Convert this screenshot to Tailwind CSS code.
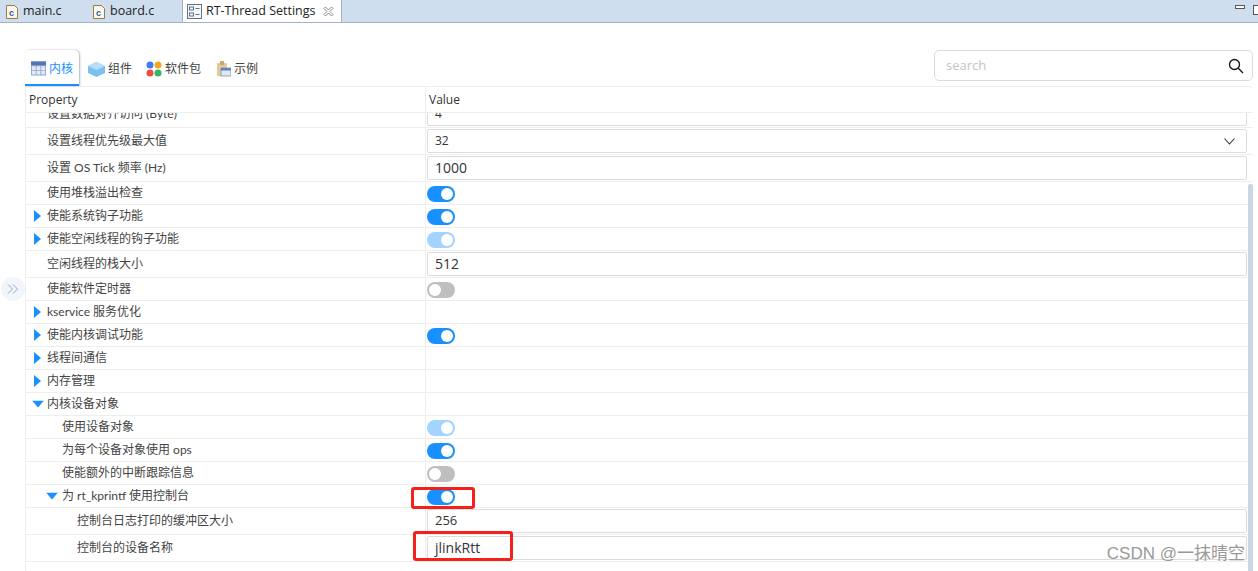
<!DOCTYPE html>
<html lang="zh-CN">
<head>
    <meta charset="UTF-8">
    <title>RT-Thread Settings</title>
    <script src="https://cdn.jsdelivr.net/npm/@tailwindcss/browser@4"></script>
</head>
<body class="bg-white">
<div class="relative w-[1258px] h-[571px] overflow-hidden bg-white text-[#333] text-[12px] font-['Open_Sans','Noto_Sans_CJK_SC',sans-serif]">

    <!-- editor tabs -->
    <div class="flex h-[23px] bg-[#cfdeee] border-b border-[#a3b2c6]">
        <div class="flex items-center w-[93px] pl-[6px] pt-[1px] gap-[5px] text-[12.5px] text-[#222]">
            <svg width="12" height="14" viewBox="0 0 12 14"><path d="M.5.5h8l3 3v10H.5z" fill="#fdf8ec" stroke="#9a7b45"/><text x="3" y="11" font-size="9" font-weight="700" fill="#2d5f9e" font-family="Liberation Sans">c</text></svg>
            <span>main.c</span>
        </div>
        <div class="flex items-center w-[89px] pt-[1px] gap-[5px] text-[12.5px] text-[#222]">
            <svg width="12" height="14" viewBox="0 0 12 14"><path d="M.5.5h8l3 3v10H.5z" fill="#fdf8ec" stroke="#9a7b45"/><text x="3" y="11" font-size="9" font-weight="700" fill="#2d5f9e" font-family="Liberation Sans">c</text></svg>
            <span>board.c</span>
        </div>
        <div class="flex items-center w-[160px] h-[23px] -mt-px pl-[4px] pt-[1px] gap-[4px] bg-white border-x border-[#a3b2c6] text-[12.5px] text-[#222]">
            <svg width="15" height="15" viewBox="0 0 15 15" fill="none" stroke="#5f7389"><rect x=".5" y=".5" width="14" height="14" fill="#f4f6f9"/><rect x="2.500" y="3" width="4" height="3"/><rect x="2.500" y="9" width="4" height="3"/><path d="M8.500 4.500h4M8.500 10.500h4"/></svg>
            <span class="whitespace-nowrap">RT-Thread Settings</span>
            <svg class="ml-[3px]" width="11" height="11" viewBox="0 0 11 11" fill="none" stroke="#8a8a8a"><path d="M1 2.500 2.500 1 5.500 4 8.500 1 10 2.500 7 5.500 10 8.500 8.500 10 5.500 7 2.500 10 1 8.500 4 5.500z"/></svg>
        </div>
        <div class="ml-auto flex items-start pt-[5px] gap-[8px]">
            <div class="w-[10px] h-[4px] border border-[#555] bg-white"></div>
            <div class="w-[5px] h-[10px] border-l border-y border-[#555] bg-white"></div>
        </div>
    </div>

    <!-- collapse handle -->
    <div class="absolute left-[1px] top-[277px] w-[24px] h-[24px] rounded-full bg-[#f2f5f9] flex items-center justify-center">
        <svg width="12" height="10" viewBox="0 0 12 10" fill="none" stroke="#88a9cc"><path d="M1 .5 5.500 5 1 9.500M6 .5 10.500 5 6 9.500"/></svg>
    </div>

    <div class="pl-[25px] pr-[5px] pt-[27px]">
        <!-- tabs + search -->
        <div class="flex items-start h-[36px]">
            <div class="flex items-center gap-[3px] w-[54px] h-[36px] pl-[6px] pt-[3px] rounded-t-[5px] border-b-2 border-[#1890ff] shadow-[1px_0_2px_rgba(0,0,0,0.3)] text-[#1890ff]">
                <svg width="15" height="15" viewBox="0 0 16 15"><rect width="16" height="15" fill="#8fa8d8"/><rect width="16" height="4" fill="#5274b8"/><path d="M1 5h4v4H1zM6 5h4v4H6zM11 5h4v4h-4zM1 10h4v4H1zM6 10h4v4H6zM11 10h4v4h-4z" fill="#e4ebf7"/></svg>
                <span>内核</span>
            </div>
            <div class="flex items-center gap-[3px] h-[34px] pt-[4px] ml-[9px] text-[#444]">
                <svg width="17" height="15" viewBox="0 0 17 15"><path d="M8.500 0 17 4v7l-8.500 4L0 11V4z" fill="#7cc0f0"/><path d="M8.500 0 17 4l-8.500 4L0 4z" fill="#b7def8"/></svg>
                <span>组件</span>
            </div>
            <div class="flex items-center gap-[3px] h-[34px] pt-[4px] ml-[14px] text-[#444]">
                <svg width="16" height="16" viewBox="0 0 16 16"><circle cx="4" cy="4" r="3.500" fill="#3d7df0"/><circle cx="12" cy="4" r="3.500" fill="#f5a623"/><circle cx="4" cy="12" r="3.500" fill="#ef4b3e"/><circle cx="12" cy="12" r="3.500" fill="#35b560"/></svg>
                <span>软件包</span>
            </div>
            <div class="flex items-center gap-[3px] h-[34px] pt-[4px] ml-[16px] text-[#444]">
                <svg width="14" height="16" viewBox="0 0 14 16"><rect y="2" width="10" height="13" rx="1" fill="#e8c99c"/><rect x="3" width="4" height="4" fill="#c9a878"/><rect x="4" y="7" width="10" height="8" fill="#dfe8f3" stroke="#7d93ad" stroke-width=".8"/><rect x="4" y="7" width="10" height="2.500" fill="#5e86b8"/></svg>
                <span>示例</span>
            </div>
            <div class="ml-auto flex items-center justify-between w-[319px] h-[31px] pl-[11px] pr-[8px] border border-[#dcdcdc] rounded-[5px] text-[13px] text-[#c4c4c4]">
                <span>search</span>
                <svg width="16" height="16" viewBox="0 0 16 16" fill="none" stroke="#111" stroke-width="1.300"><circle cx="6.500" cy="6.500" r="5"/><path d="m10.300 10.300 4.700 4.700"/></svg>
            </div>
        </div>

        <!-- property table -->
        <div class="h-[485px] border-l border-[#eeeeee] overflow-hidden">
            <div class="flex h-[27px] items-center border-b border-t border-[#eeeeee] rounded-tr-[5px] text-[#333]">
                <div class="w-[400px] pl-[3px] border-r border-[#eeeeee] h-full flex items-center">Property</div>
                <div class="pl-[3px]">Value</div>
            </div>
            <div id="rows"></div>
        </div>
    </div>

    <!-- scrollbar -->
    <div class="absolute left-[1248px] top-[184px] w-[5px] h-[387px] bg-[#ccd5e3] rounded-t-[2px]"></div>

    <!-- red annotations -->
    <div class="absolute left-[411px] top-[487px] w-[64px] h-[22px] border-[3px] border-[#f5201a] rounded-[3px]"></div>
    <div class="absolute left-[413px] top-[531px] w-[100px] h-[30px] border-[3px] border-[#f5201a] rounded-[3px]"></div>

    <!-- watermark -->
    <div class="absolute right-[13px] top-[543px] text-[17px] leading-[22px] text-[#999] font-['Liberation_Sans','Noto_Sans_CJK_SC',sans-serif]">CSDN @一抹晴空</div>
</div>

<script>
    const rowsEl = document.getElementById('rows');

    const arrowRight = '<svg class="absolute left-[8px] top-1/2 -translate-y-1/2" width="7" height="12" viewBox="0 0 7 12"><path d="M0 0l7 6-7 6z" fill="#1890ff"/></svg>';
    const arrowDown = '<svg class="absolute top-1/2 -translate-y-1/2" width="12" height="7" viewBox="0 0 12 7"><path d="M0 0h12L6 7z" fill="#1890ff"/></svg>';
    const chevron = '<svg width="11" height="7" viewBox="0 0 11 7" fill="none" stroke="#333" stroke-width="1.100"><path d="M.5.5l5 5.500 5-5.500"/></svg>';

    function toggle(kind) {
        if (kind === 'off') {
            return '<div class="flex items-center mt-[1px] w-[28px] h-[16px] rounded-full bg-[#bfbfbf] pl-[2px]"><div class="w-[12px] h-[12px] rounded-full bg-white"></div></div>';
        }
        if (kind === 'dim') {
            return '<div class="flex items-center justify-end mt-[1px] w-[28px] h-[16px] rounded-full bg-[#a3d3ff] pr-[2px]"><div class="w-[12px] h-[12px] rounded-full bg-white"></div></div>';
        }
        return '<div class="flex items-center justify-end mt-[1px] w-[28px] h-[16px] rounded-full bg-[#1890ff] pr-[2px]"><div class="w-[12px] h-[12px] rounded-full bg-white"></div></div>';
    }

    function input(text, size, select) {
        const sizes = { s: 'text-[12px]', m: 'text-[13px]', l: 'text-[14px]' };
        return `<div class="flex items-center justify-between w-[820px] h-[24px] pl-[7px] pr-[11px] border border-[#dcdcdc] rounded-[2px] ${sizes[size]} text-[#333]"><span class="-mt-[1px]">${text}</span>${select ? chevron : ''}</div>`;
    }

    // label, left offset, arrow, value html
    const rows = [
        ['设置线程优先级最大值', 47, '', input('32', 's', true)],
        ['设置 OS Tick 频率 (Hz)', 47, '', input('1000', 'l')],
        ['使用堆栈溢出检查', 47, '', toggle('on')],
        ['使能系统钩子功能', 47, 'r', toggle('on')],
        ['使能空闲线程的钩子功能', 47, 'r', toggle('dim')],
        ['空闲线程的栈大小', 47, '', input('512', 'l')],
        ['使能软件定时器', 47, '', toggle('off')],
        ['kservice 服务优化', 47, 'r', ''],
        ['使能内核调试功能', 47, 'r', toggle('on')],
        ['线程间通信', 47, 'r', ''],
        ['内存管理', 47, 'r', ''],
        ['内核设备对象', 47, 'd1', ''],
        ['使用设备对象', 62, '', toggle('dim')],
        ['为每个设备对象使用 ops', 62, '', toggle('on')],
        ['使能额外的中断跟踪信息', 62, '', toggle('off')],
        ['为 rt_kprintf 使用控制台', 62, 'd2', toggle('on')],
        ['控制台日志打印的缓冲区大小', 77, '', input('256', 'm')],
        ['控制台的设备名称', 77, '', input('jlinkRtt', 'l')],
    ];

    function rowHtml([label, left, arrow, value]) {
        const tall = value.includes('w-[820px]');
        let icon = '';
        if (arrow === 'r') icon = arrowRight;
        if (arrow === 'd1') icon = arrowDown.replace('absolute', 'absolute left-[6px]');
        if (arrow === 'd2') icon = arrowDown.replace('absolute', 'absolute left-[20px]');
        return `<div class="flex border-b border-[#eeeeee] ${tall ? 'h-[27px]' : 'h-[23px]'}">
            <div class="relative w-[400px] flex items-center border-r border-[#eeeeee] whitespace-nowrap font-['Lato','Noto_Sans_CJK_SC',sans-serif] text-[#444]" style="padding-left:${left - 26}px">${icon}<span class="-mt-[1px]">${label}</span></div>
            <div class="flex items-center pl-[1px]">${value}</div>
        </div>`;
    }

    // first row is scrolled partly under the header
    const clipped = `<div class="h-[15px] overflow-hidden"><div class="-mt-[12px]">${rowHtml(['设置数据对齐访问 (Byte)', 47, '', input('4', 's')])}</div></div>`;
    rowsEl.innerHTML = clipped + rows.map(rowHtml).join('');
</script>
</body>
</html>
